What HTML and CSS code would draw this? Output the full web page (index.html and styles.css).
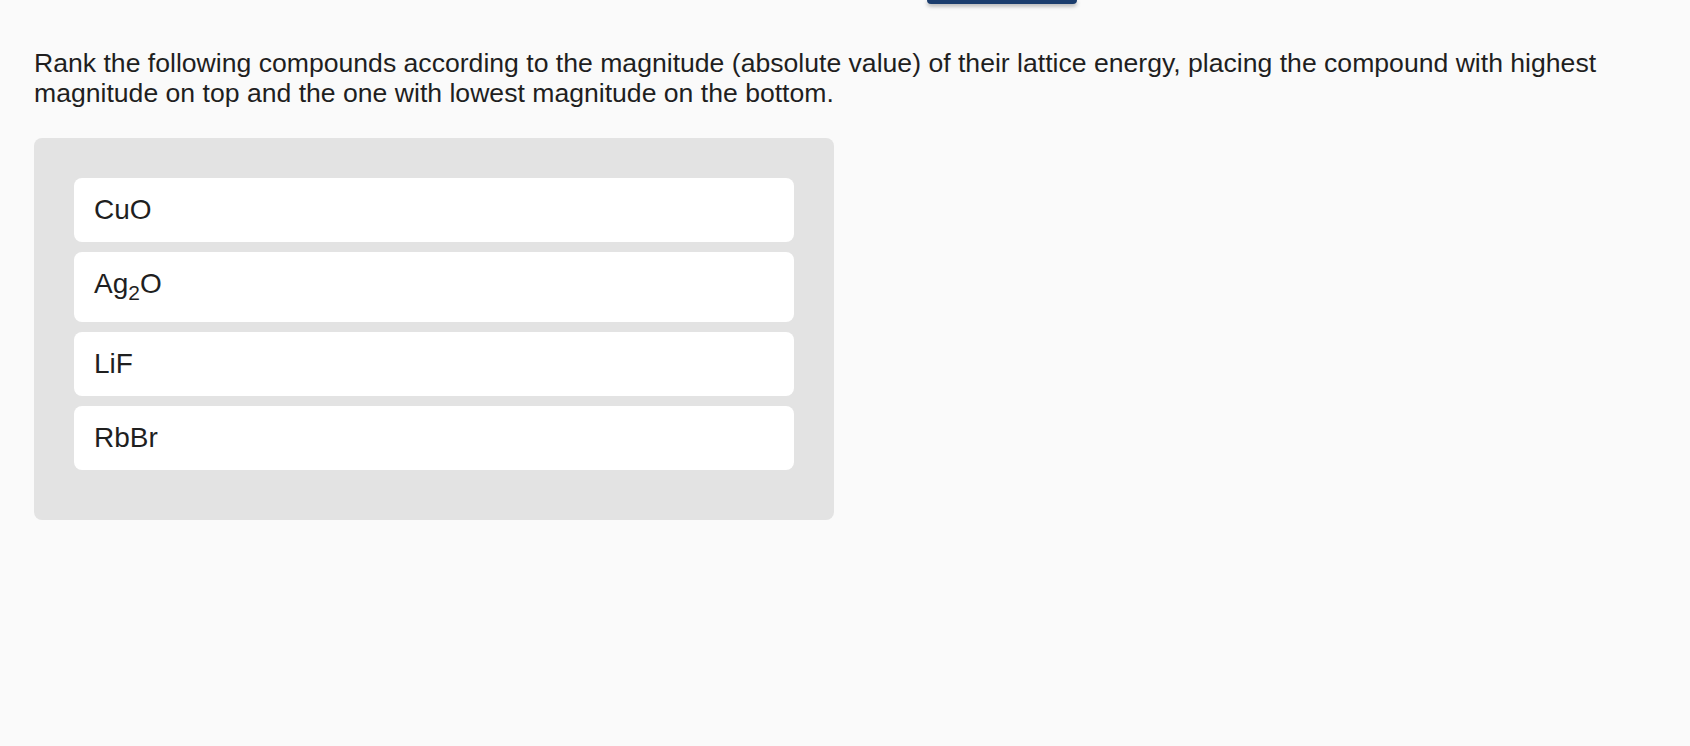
FILE: index.html
```html
<!DOCTYPE html>
<html>
<head>
<meta charset="utf-8">
<link rel="stylesheet" href="styles.css">
</head>
<body>
<div class="topbar"><div class="top-btn"></div></div>
<main class="content">
  <p class="question">Rank the following compounds according to the magnitude (absolute value) of their lattice energy, placing the compound with highest magnitude on top and the one with lowest magnitude on the bottom.</p>
  <div class="rank-panel">
    <div class="rank-item">CuO</div>
    <div class="rank-item">Ag<sub>2</sub>O</div>
    <div class="rank-item">LiF</div>
    <div class="rank-item">RbBr</div>
  </div>
</main>
</body>
</html>
```
FILE: styles.css
```css
html, body {
  margin: 0;
  padding: 0;
  background: #fafafa;
  font-family: "Liberation Sans", Arial, sans-serif;
  color: #1f1f1f;
}
.topbar {
  height: 4px;
  display: flex;
}
.top-btn {
  margin-left: 927px;
  width: 150px;
  height: 4px;
  background: #1b3d6d;
  border-radius: 0 0 8px 8px;
  box-shadow: 0 2px 4px rgba(0, 0, 0, 0.35);
}
.content {
  padding: 44px 34px 0 34px;
}
.question {
  margin: 0;
  font-size: 26.6px;
  line-height: 30px;
}
.rank-panel {
  margin-top: 30px;
  width: 720px;
  padding: 40px 40px 40px 40px;
  background: #e3e3e3;
  border-radius: 8px;
}
.rank-item {
  background: #ffffff;
  border-radius: 8px;
  padding: 17px 20px;
  margin-bottom: 10px;
  font-size: 28px;
  line-height: 30px;
}
.rank-item sub {
  font-size: 21px;
  line-height: 24px;
}
```
